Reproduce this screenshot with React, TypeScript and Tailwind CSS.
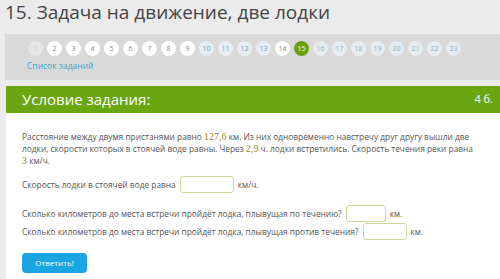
import React from "react";

const nums = Array.from({ length: 23 }, (_, i) => i + 1);

function Circle({ n }: { n: number }) {
  let cls = "bg-white text-[#8a8a8a]";
  if (n === 1) cls = "bg-[#e6e6e6] text-[#c8c8c8]";
  else if (n === 15) cls = "bg-[#6a9f10] text-white";
  else if (n >= 10 && n <= 13) cls = "bg-[#e6eef2] text-[#6a9cbc]";
  else if (n >= 16) cls = "bg-[#e6ecef] text-[#8ab0c8]";
  return (
    <div className={`w-[15px] h-[15px] rounded-full flex items-center justify-center text-[7px] leading-none ${cls}`}>
      {n}
    </div>
  );
}

function Num({ children }: { children: React.ReactNode }) {
  return <span className="text-[#9a8a10] text-[10px] leading-[10px]" style={{ fontFamily: '"Liberation Serif", serif' }}>{children}</span>;
}

function Input({ w }: { w: string }) {
  return <span className={`block h-[17px] ${w} border border-[#c9d99c] rounded-[3px] bg-white`} />;
}

export default function App() {
  return (
    <div className="w-[500px] h-[279px] overflow-hidden bg-[#ebebeb] text-[#555]" style={{ fontFamily: '"Open Sans", sans-serif' }}>
      <div className="h-[34px] pl-[5px] text-[19px] leading-[24px] text-[#444]">15. Задача на движение, две лодки</div>
      <div className="ml-[5px] bg-[#d9d9d9] h-[46px] pl-[23px] pt-[7px]">
        <div className="flex gap-[4px]">
          {nums.map((n) => (
            <Circle key={n} n={n} />
          ))}
        </div>
        <div className="text-[8.5px] text-[#4a9fcc] mt-[4px] -ml-[1px]">Список заданий</div>
      </div>
      <div className="ml-[6px] mt-[6px] bg-[#6aa512] h-[27px] flex items-center justify-between pl-[16px] pr-[7px] text-white">
        <span className="text-[15px]">Условие задания:</span>
        <span className="text-[11px]">4 б.</span>
      </div>
      <div className="ml-[6px] bg-white h-[200px] pl-[16px] pt-[18px] text-[8.35px] leading-[12px]">
        <p className="w-[452px]">
          Расстояние между двумя пристанями равно <Num>127,6</Num> км. Из них одновременно навстречу друг другу вышли две лодки, скорости которых в стоячей воде равны. Через <Num>2,9</Num> ч. лодки встретились. Скорость течения реки равна <Num>3</Num> км/ч.
        </p>
        <div className="mt-[9px] flex items-center">
          <span>Скорость лодки в стоячей воде равна</span>
          <span className="ml-[4px]"><Input w="w-[54px]" /></span>
          <span className="ml-[4px]">км/ч.</span>
        </div>
        <div className="mt-[12px] flex items-center">
          <span>Сколько километров до места встречи пройдёт лодка, плывущая по течению?</span>
          <span className="ml-[4px]"><Input w="w-[40px]" /></span>
          <span className="ml-[4px]">км.</span>
        </div>
        <div className="mt-[1px] flex items-center">
          <span>Сколько километров до места встречи пройдёт лодка, плывущая против течения?</span>
          <span className="ml-[4px]"><Input w="w-[44px]" /></span>
          <span className="ml-[4px]">км.</span>
        </div>
        <button className="mt-[13px] w-[65px] h-[20px] rounded-[4px] bg-[#1aa5e2] text-white text-[8px]">Ответить!</button>
      </div>
    </div>
  );
}
